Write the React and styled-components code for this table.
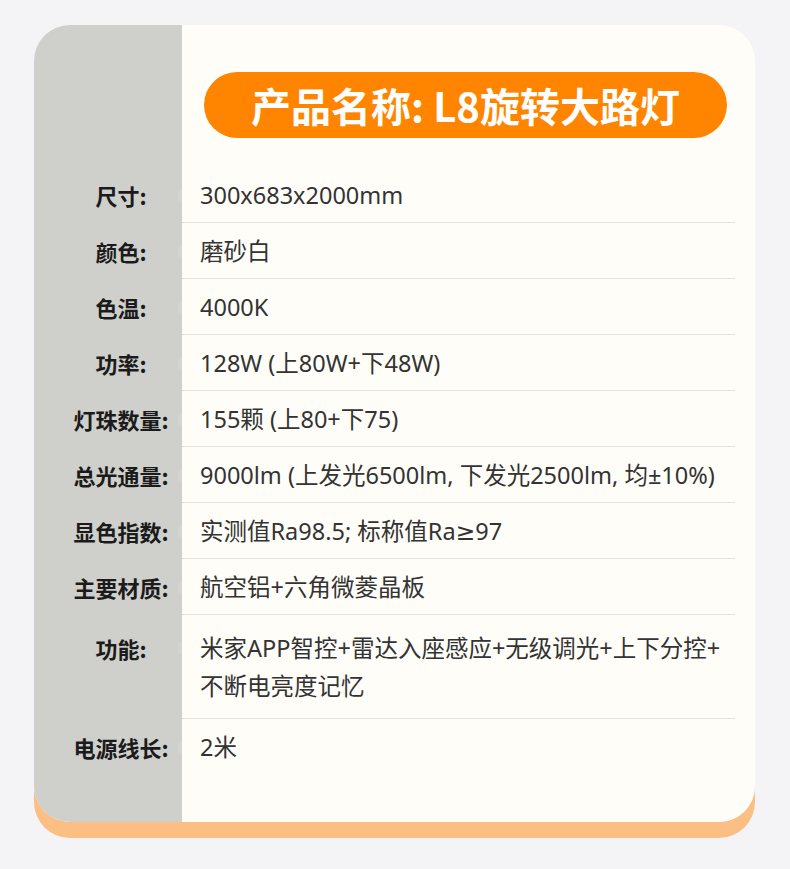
import styled, { createGlobalStyle } from 'styled-components';

const GlobalStyle = createGlobalStyle`
	html, body {
		margin: 0;
		padding: 0;
		background: #f4f4f6;
	}
	body {
		font-family: "Noto Sans CJK SC", "Noto Sans", sans-serif;
	}
`;

const Page = styled.div`
	width: 790px;
	height: 869px;
	box-sizing: border-box;
	padding: 25px 35px 0 34px;
	background: #f4f4f6;
`;

const Card = styled.div`
	width: 721px;
	height: 797px;
	box-sizing: border-box;
	border-radius: 36px;
	overflow: hidden;
	background: linear-gradient(to right, #cfd0cb 148px, #fefdf8 148px);
	box-shadow: 0 16px 0 0 #fbbe83;
	padding-top: 47px;
`;

const Header = styled.div`
	display: flex;
	padding-left: 170px;
	margin-bottom: 29px;
`;

const TitlePill = styled.div`
	width: 523px;
	height: 66px;
	border-radius: 33px;
	background: #ff8500;
	color: #ffffff;
	display: flex;
	align-items: center;
	justify-content: center;
	font-size: 40px;
	font-weight: 700;
`;

const Row = styled.div`
	display: grid;
	grid-template-columns: 148px 1fr;
	line-height: 38px;
`;

const Label = styled.div`
	padding: ${p => p.$pad}px 0 0 26px;
	text-align: center;
	font-size: 22px;
	font-weight: 700;
	color: #1b1b1b;
`;

const Value = styled.div`
	position: relative;
	margin-right: 20px;
	padding: ${p => p.$pad}px 0 ${p => p.$pad - 1}px 18px;
	font-family: "Noto Sans", "DejaVu Sans", "Noto Sans CJK SC", sans-serif;
	font-size: 23.5px;
	color: #333333;
	white-space: pre-line;
	border-bottom: 1px solid ${p => (p.$last ? 'transparent' : '#e3e3de')};

	&::before {
		content: '';
		position: absolute;
		left: -4px;
		top: ${p => p.$pad + 12}px;
		width: 8px;
		height: 14px;
		border-radius: 50%;
		background: rgba(255, 255, 255, 0.12);
	}
`;

const specs = [
	['尺寸:', '300x683x2000mm'],
	['颜色:', '磨砂白'],
	['色温:', '4000K'],
	['功率:', '128W (上80W+下48W)'],
	['灯珠数量:', '155颗 (上80+下75)'],
	['总光通量:', '9000lm (上发光6500lm, 下发光2500lm, 均±10%)'],
	['显色指数:', '实测值Ra98.5; 标称值Ra≥97'],
	['主要材质:', '航空铝+六角微菱晶板'],
	['功能:', '米家APP智控+雷达入座感应+无级调光+上下分控+\n不断电亮度记忆', 14],
	['电源线长:', '2米'],
];

export default function App() {
	return (
		<Page>
			<GlobalStyle />
			<Card>
				<Header>
					<TitlePill>产品名称: L8旋转大路灯</TitlePill>
				</Header>
				{specs.map(([label, value, pad = 9], i) => (
					<Row key={label}>
						<Label $pad={pad}>{label}</Label>
						<Value $pad={pad} $last={i === specs.length - 1}>
							{value}
						</Value>
					</Row>
				))}
			</Card>
		</Page>
	);
}
